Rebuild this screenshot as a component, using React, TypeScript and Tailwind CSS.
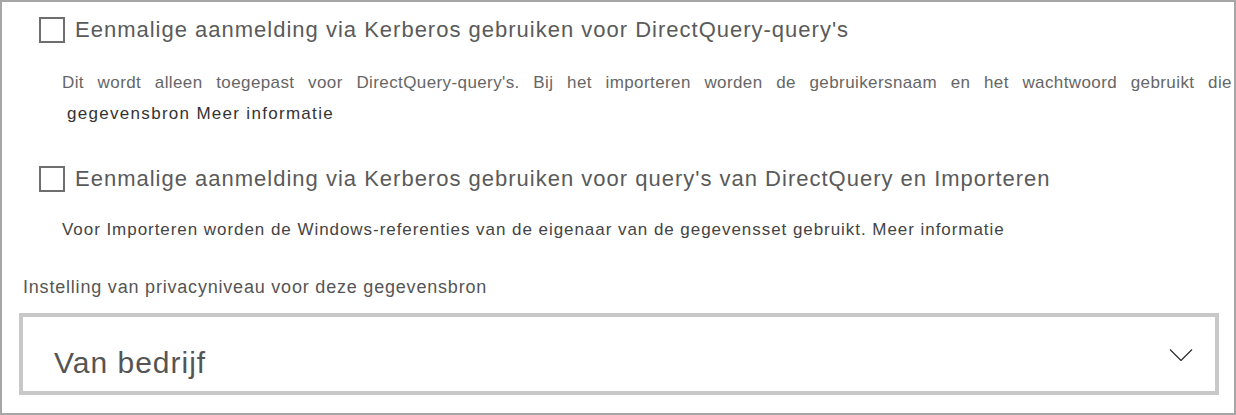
import React from 'react';

const Checkbox: React.FC = () => (
  <span className="block w-[26px] h-[26px] border-2 border-[#6e6e6e] bg-white shrink-0" />
);

export default function App() {
  return (
    <div
      className="w-[1236px] h-[415px] border-2 border-[#a6a6a6] bg-white overflow-hidden relative"
      style={{ fontFamily: '"Liberation Sans", Arial, sans-serif' }}
    >
      <div className="flex items-center gap-[10px] pl-[37px] pt-[15px]">
        <Checkbox />
        <span className="text-[22px] tracking-[1px] text-[#5a5a5a] leading-[26px] whitespace-nowrap">
          Eenmalige aanmelding via Kerberos gebruiken voor DirectQuery-query's
        </span>
      </div>

      <div className="pl-[60px] pt-[24px] text-[17px] leading-[31px]">
        <div className="whitespace-nowrap text-[#666666] tracking-[0.4px] [word-spacing:8.5px]">
          Dit wordt alleen toegepast voor DirectQuery-query's. Bij het importeren worden de gebruikersnaam en het wachtwoord gebruikt die
        </div>
        <div className="pl-[5px] text-[#333333] tracking-[1.3px]">gegevensbron Meer informatie</div>
      </div>

      <div className="flex items-center gap-[10px] pl-[37px] pt-[37px]">
        <Checkbox />
        <span className="text-[22px] tracking-[1px] text-[#5a5a5a] leading-[26px] whitespace-nowrap">
          Eenmalige aanmelding via Kerberos gebruiken voor query's van DirectQuery en Importeren
        </span>
      </div>

      <div className="pl-[60px] pt-[28px] text-[17px] leading-[20px] tracking-[0.95px] text-[#444444] whitespace-nowrap">
        Voor Importeren worden de Windows-referenties van de eigenaar van de gegevensset gebruikt. Meer informatie
      </div>

      <div className="pl-[21px] pt-[36px] text-[18px] leading-[22px] tracking-[0.8px] text-[#555555] whitespace-nowrap">
        Instelling van privacyniveau voor deze gegevensbron
      </div>

      <div className="ml-[17px] mt-[15px] w-[1200px] h-[82px] border-4 border-[#c8c8c8] flex items-center justify-between pl-[31px] pr-[22px]">
        <span className="text-[30px] tracking-[1px] text-[#555555] pt-[16px]">Van bedrijf</span>
        <svg width="24" height="12" viewBox="0 0 24 12" className="mt-[2px]">
          <path d="M1 0.5 L12 11.5 L23 0.5" fill="none" stroke="#333333" strokeWidth="1.3" />
        </svg>
      </div>
    </div>
  );
}
